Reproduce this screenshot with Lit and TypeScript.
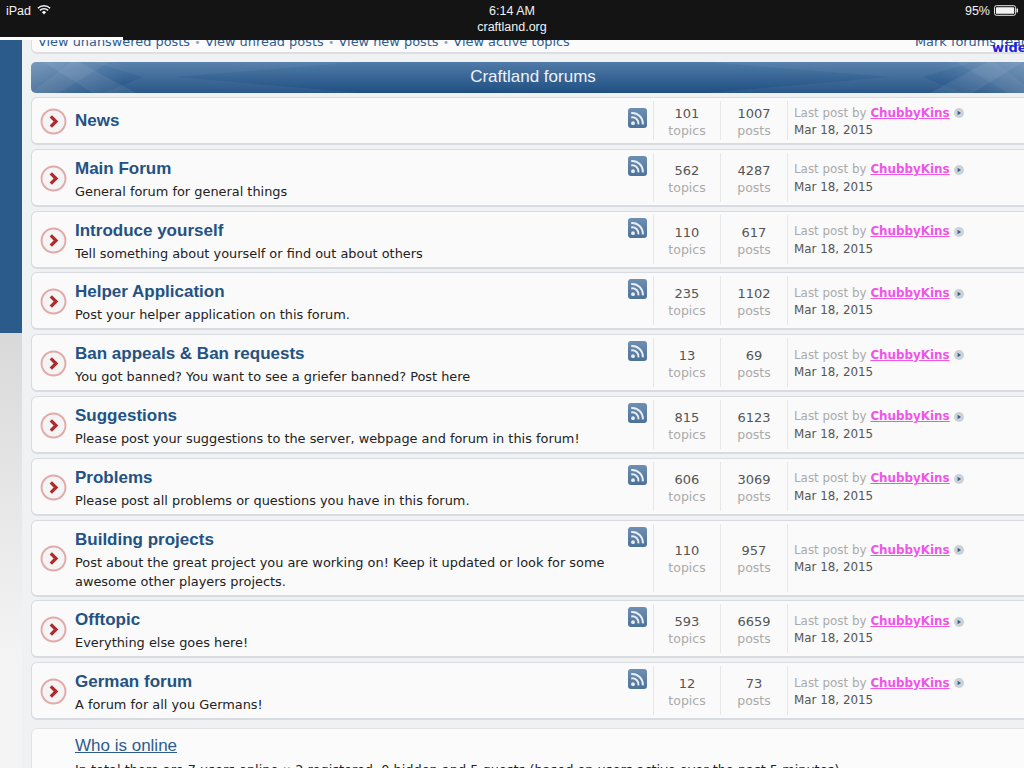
import { LitElement, html, css, svg } from "lit";
import { customElement } from "lit/decorators.js";

interface Forum { title: string; desc: string[]; topics: number; posts: number; compact?: boolean; }

const FORUMS: Forum[] = [
  { title: "News", desc: [], topics: 101, posts: 1007, compact: true },
  { title: "Main Forum", desc: ["General forum for general things"], topics: 562, posts: 4287 },
  { title: "Introduce yourself", desc: ["Tell something about yourself or find out about others"], topics: 110, posts: 617 },
  { title: "Helper Application", desc: ["Post your helper application on this forum."], topics: 235, posts: 1102 },
  { title: "Ban appeals & Ban requests", desc: ["You got banned? You want to see a griefer banned? Post here"], topics: 13, posts: 69 },
  { title: "Suggestions", desc: ["Please post your suggestions to the server, webpage and forum in this forum!"], topics: 815, posts: 6123 },
  { title: "Problems", desc: ["Please post all problems or questions you have in this forum."], topics: 606, posts: 3069 },
  { title: "Building projects", desc: ["Post about the great project you are working on! Keep it updated or look for some", "awesome other players projects."], topics: 110, posts: 957 },
  { title: "Offtopic", desc: ["Everything else goes here!"], topics: 593, posts: 6659 },
  { title: "German forum", desc: ["A forum for all you Germans!"], topics: 12, posts: 73 },
];

const circle = html`<svg class="bullet" viewBox="0 0 28 28" width="27" height="27">
  <circle cx="14" cy="14" r="12.4" fill="#f4f4f4" stroke="#e2a9a9" stroke-width="2"/>
  <path d="M11.2 8.6 L16.6 14 L11.2 19.4" fill="none" stroke="#ae2a2c" stroke-width="3.4"/>
</svg>`;

const rss = html`<svg class="rss" viewBox="0 0 19 20" width="19" height="20">
  <defs><linearGradient id="rg" x1="0" y1="0" x2="0" y2="1"><stop offset="0" stop-color="#6d8fb2"/><stop offset="1" stop-color="#4d7299"/></linearGradient></defs>
  <rect width="19" height="20" rx="3" fill="url(#rg)"/>
  <circle cx="5" cy="15.2" r="1.9" fill="#e8eef4"/>
  <path d="M3.2 9.4 A6.2 6.2 0 0 1 10.4 16.4" fill="none" stroke="#e8eef4" stroke-width="2"/>
  <path d="M3.2 5 A10.6 10.6 0 0 1 14.8 16.4" fill="none" stroke="#e8eef4" stroke-width="2"/>
</svg>`;

const goto = html`<svg class="goto" viewBox="0 0 10 10" width="10" height="10">
  <circle cx="5" cy="5" r="5" fill="#ccd2d8"/>
  <path d="M3.6 2.8 L7 5 L3.6 7.2 Z" fill="#3c5f86"/>
</svg>`;

const swoosh = svg`
  <defs><linearGradient id="fade"><stop offset="0" stop-color="#fff" stop-opacity=".24"/><stop offset="1" stop-color="#fff" stop-opacity="0"/></linearGradient></defs>
  <rect width="95" height="31" fill="url(#fade)"/>
  <polygon points="12,0 48,0 105,31 62,31" fill="#fff" opacity=".07"/>
  <polygon points="0,31 40,0 78,0 28,31" fill="#fff" opacity=".05"/>
  <polygon points="62,0 330,0 145,15 330,31 72,31 112,15" fill="#fff" opacity=".05"/>
`;

@customElement("app-root")
export class AppRoot extends LitElement {
  static styles = css`
    :host { display: block; width: 1024px; height: 768px; overflow: hidden; position: relative; background: #f0f1f3; font-family: "DejaVu Sans", Verdana, sans-serif; }
    .status { height: 40px; background: #141414; color: #f2f2f2; font: 12.5px/1 "Liberation Sans", Arial, sans-serif; display: grid; grid-template-columns: 1fr auto 1fr; position: relative; }
    .status .l { display: flex; gap: 6px; padding: 4px 0 0 6px; align-items: flex-start; line-height: 14px; }
    .status .c { text-align: center; padding-top: 3px; line-height: 16px; }
    .status .r { display: flex; justify-content: flex-end; gap: 4px; padding: 4px 6px 0 0; line-height: 14px; }
    .battery { margin-top: 1px; }
    .progress { position: absolute; left: 0; top: 37px; width: 123px; height: 3px; background: #fff; }
    .page { display: grid; grid-template-columns: 22px 1fr; height: 728px; }
    .side { background: linear-gradient(#d9d9d9 293px, #f4f4f4 620px); }
    .side div { height: 293px; background: #2a5b8b; }
    .main { padding-left: 9px; width: 1010px; box-sizing: border-box; display: flex; flex-direction: column; }
    .strip { width: 1010px; height: 14px; box-sizing: border-box; border: solid #dcdee2; border-width: 0 0 2px 1px; border-radius: 0 0 6px 6px; background: #fbfbfb; font-size: 12.9px; color: #2f5c8e; line-height: 14px; overflow: hidden; position: relative; padding-left: 6px; white-space: pre; }
    .strip .links { position: absolute; left: 6px; top: -5px; }
    .strip .dot { color: #8aa5c2; font-size: 10px; margin: 0 1.3px; }
    .strip .mark { position: absolute; left: 883px; top: -5px; }
    .wide { position: absolute; left: 992px; top: 41px; font: bold 13px/14px "DejaVu Sans", sans-serif; color: #2222dd; }
    .banner { width: 1004px; height: 31px; margin-top: 8px; border-radius: 5px; background: linear-gradient(#507ba7, #1f4f83); color: #eef2f7; font: 17px/29px "Liberation Sans", Arial, sans-serif; text-align: center; position: relative; overflow: hidden; box-sizing: border-box; }
    .banner svg { position: absolute; top: 0; height: 31px; width: 340px; }
    .banner .sl { left: 0; }
    .banner .sr { right: 0; transform: scaleX(-1); }
    .banner span { position: relative; }
    .list { display: flex; flex-direction: column; gap: 3.8px; margin-top: 4px; }
    .row { width: 1010px; min-height: 58px; box-sizing: border-box; background: #fafafa; border: 1px solid #d8dbdf; border-bottom-width: 2px; border-radius: 6px; display: flex; padding: 3px 0; }
    .row.compact { min-height: 48px; }
    .bullet { margin: auto 0; margin-left: 8px; padding-top: 2px; flex: none; }
    .body { width: 561px; flex: none; padding: 5px 0 1px 8px; box-sizing: border-box; }
    .row.compact .body { padding-top: 9px; }
    .title { font: bold 17px/21px "Liberation Sans", Arial, sans-serif; color: #235283; }
    .desc { font-size: 12.9px; line-height: 19px; color: #222; margin-top: 3px; white-space: nowrap; }
    .desc + .desc { margin-top: 0; }
    .rss { flex: none; margin: 3px 6px 0 0; }
    .row.compact .rss { margin-top: 7px; }
    .stat { width: 67px; flex: none; box-sizing: border-box; border-left: 1px solid #e6e7e9; display: flex; flex-direction: column; justify-content: center; text-align: center; font-size: 13px; line-height: 17px; color: #555; padding-top: 3px; }
    .stat small { font-size: 12.5px; color: #aaa; }
    .last { flex: none; border-left: 1px solid #e6e7e9; padding: 3px 0 0 6px; display: flex; flex-direction: column; justify-content: center; font-size: 11.9px; line-height: 17.5px; color: #555; white-space: nowrap; }
    .last .by { color: #aaa; display: flex; align-items: center; gap: 4px; }
    .last a { color: #f055ea; font-weight: bold; text-decoration: underline; }
    .online { width: 1010px; margin-top: 7.5px; height: 100px; box-sizing: border-box; border: 1px solid #e2e4e7; border-radius: 6px; background: #fbfbfb; padding: 5px 0 0 43px; }
    .online h3 { margin: 0; font: 17px/24px "Liberation Sans", Arial, sans-serif; color: #2f5c8e; text-decoration: underline; }
    .online p { margin: 3px 0 0; font-size: 12.9px; line-height: 18px; color: #222; white-space: nowrap; }
  `;

  private sep() { return html`<span class="dot"> • </span>`; }

  render() {
    return html`
      <div class="status">
        <div class="l">iPad
          <svg viewBox="0 0 16 12" width="14" height="11"><path d="M1 4.6 A10 10 0 0 1 15 4.6 M3.3 7 A6.8 6.8 0 0 1 12.7 7" fill="none" stroke="#f2f2f2" stroke-width="1.7"/><path d="M5.6 9 A3.4 3.4 0 0 1 10.4 9 L8 11.6 Z" fill="#f2f2f2"/></svg>
        </div>
        <div class="c">6:14 AM<br />craftland.org</div>
        <div class="r">95%
          <svg class="battery" viewBox="0 0 25 11" width="24" height="11"><rect x=".5" y=".5" width="22" height="10" rx="2" fill="none" stroke="#f2f2f2"/><rect x="2" y="2" width="19" height="7" rx="1" fill="#f2f2f2"/><rect x="23.5" y="3.5" width="1.5" height="4" fill="#f2f2f2"/></svg>
        </div>
        <div class="progress"></div>
      </div>
      <div class="page">
        <div class="side"><div></div></div>
        <div class="main">
          <div class="strip"><span class="links">View unanswered posts${this.sep()}View unread posts${this.sep()}View new posts${this.sep()}View active topics</span><span class="mark">Mark forums read</span></div>
          <div class="banner">
            <svg class="sl" viewBox="0 0 340 31" preserveAspectRatio="none">${swoosh}</svg>
            <svg class="sr" viewBox="0 0 340 31" preserveAspectRatio="none">${swoosh}</svg>
            <span>Craftland forums</span>
          </div>
          <div class="list">
            ${FORUMS.map((f) => html`
              <div class="row ${f.compact ? "compact" : ""}">
                ${circle}
                <div class="body">
                  <div class="title">${f.title}</div>
                  ${f.desc.map((d) => html`<div class="desc">${d}</div>`)}
                </div>
                ${rss}
                <div class="stat">${f.topics}<small>topics</small></div>
                <div class="stat">${f.posts}<small>posts</small></div>
                <div class="last">
                  <div class="by"><span>Last post by <a>ChubbyKins</a></span>${goto}</div>
                  <div>Mar 18, 2015</div>
                </div>
              </div>`)}
          </div>
          <div class="online">
            <h3>Who is online</h3>
            <p>In total there are 7 users online :: 2 registered, 0 hidden and 5 guests (based on users active over the past 5 minutes)</p>
          </div>
        </div>
      </div>
      <div class="wide">wide</div>
    `;
  }
}
